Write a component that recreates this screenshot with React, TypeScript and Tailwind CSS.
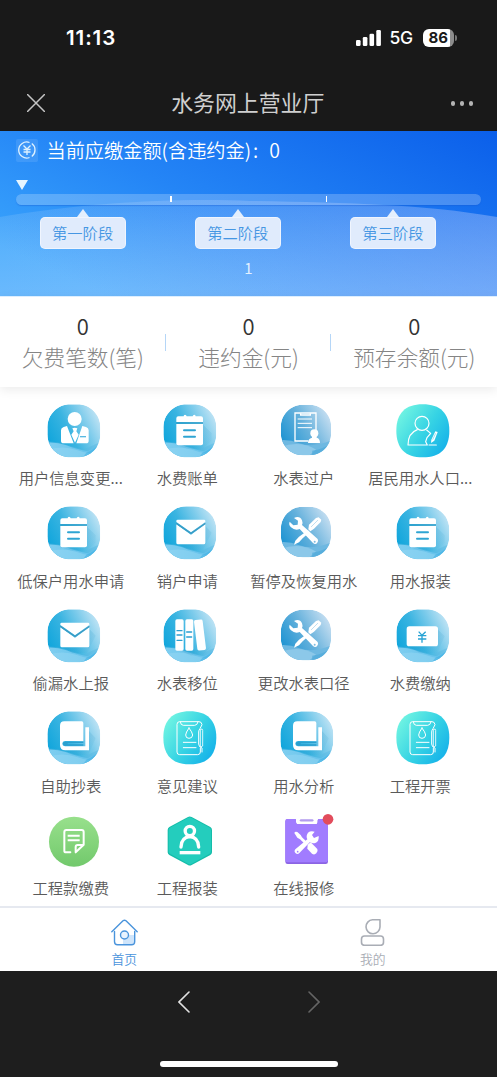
import React from "react";

type IconProps = { children?: React.ReactNode };

const Svg = ({ children }: IconProps) => (
  <svg viewBox="0 0 162 162" className="ml-[6px] h-[54px] w-[54px] shrink-0 overflow-visible">
    {children}
  </svg>
);

const BLOB =
  "M70 1H91C130 1 160 32 160 70V91C160 130 130 160 91 160H70C32 160 1 130 1 91V70C1 32 32 1 70 1Z";
const SQUIRCLE =
  "M80 1C133 1 160 28 160 80C160 133 133 160 80 160C28 160 1 133 1 80C1 28 28 1 80 1Z";

const Defs = () => (
  <svg className="absolute h-0 w-0" aria-hidden="true">
    <defs>
      <linearGradient id="aqua" x1="0" y1="0.62" x2="0.95" y2="0.15">
        <stop offset="0" stopColor="#12a6dc" />
        <stop offset="0.4" stopColor="#3ab4e1" />
        <stop offset="0.7" stopColor="#7ccbeb" />
        <stop offset="1" stopColor="#c4e5f5" />
      </linearGradient>
      <linearGradient id="steel" x1="0" y1="0.7" x2="0.95" y2="0.15">
        <stop offset="0" stopColor="#1c93d2" />
        <stop offset="0.5" stopColor="#65b1dc" />
        <stop offset="1" stopColor="#c9e0f2" />
      </linearGradient>
      <linearGradient id="mint" x1="0.05" y1="0.2" x2="1" y2="0.85">
        <stop offset="0" stopColor="#6ff3e2" />
        <stop offset="0.5" stopColor="#36d3e4" />
        <stop offset="1" stopColor="#12aeea" />
      </linearGradient>
      <linearGradient id="green" x1="0" y1="0" x2="0" y2="1">
        <stop offset="0" stopColor="#98e08c" />
        <stop offset="1" stopColor="#72c96c" />
      </linearGradient>
      <linearGradient id="wave" x1="0" y1="0" x2="1" y2="0">
        <stop offset="0" stopColor="#7fcef0" />
        <stop offset="1" stopColor="#5fbfea" />
      </linearGradient>
      <linearGradient id="shade" x1="0" y1="0" x2="1" y2="1">
        <stop offset="0" stopColor="#0878ad" stopOpacity="0.45" />
        <stop offset="1" stopColor="#0878ad" stopOpacity="0" />
      </linearGradient>
      <clipPath id="blobClip">
        <path d={BLOB} />
      </clipPath>
    </defs>
  </svg>
);

const Blob = ({ children, fill = "url(#aqua)" }: IconProps & { fill?: string }) => (
  <Svg>
    <g clipPath="url(#blobClip)">
      <path d={BLOB} fill={fill} />
      <path d="M0 113Q26 111 54 121L110 137L160 114V162H0Z" fill="#58b9e3" opacity="0.45" />
      <path d="M0 116Q30 114 58 124Q84 135 122 142Q142 132 160 120V162H0Z" fill="url(#wave)" />
      <path d="M6 136Q50 124 90 138Q112 146 128 148L104 162H20Z" fill="#9bd9f4" opacity="0.45" />
      <path d="M118 146Q142 136 156 122V138L126 160H108Z" fill="#3fb0e4" opacity="0.55" />
    </g>
    {children}
  </Svg>
);

const Steel = ({ children }: IconProps) => (
  <Svg>
    <g transform="translate(1.5 1.5) scale(0.95)">
      <g clipPath="url(#blobClip)">
        <path d={BLOB} fill="url(#steel)" />
        <path d="M0 112Q30 110 60 122Q100 138 160 114V162H0Z" fill="#6eb8e1" />
        <path d="M0 134Q60 112 112 142L90 162H0Z" fill="#98cfec" opacity="0.7" />
        <path d="M100 146Q140 138 160 122V162H100Z" fill="#4aa6d8" opacity="0.6" />
      </g>
    </g>
    {children}
  </Svg>
);

const PersonIcon = () => (
  <Blob>
    <g fill="#fff">
      <circle cx="83" cy="45" r="21" />
      <path d="M60 66L80 118H50Q42 118 42 110V79Q42 71 50 69Z" />
      <path d="M106 66L88 118H117Q125 118 125 110V79Q125 71 117 69Z" />
      <path d="M76 73Q83 69 91 73L88 82L95 92L84 116L73 92L80 82Z" />
    </g>
    <path d="M99 98H117" stroke="#59b9e2" strokeWidth="4" />
  </Blob>
);

const CalendarIcon = () => (
  <Blob>
    <path d="M40 123H120V62L146 88V110L118 134H72Z" fill="url(#shade)" opacity="0.45" />
    <g fill="#fff">
      <path d="M40 54V43Q40 37 46 37H62Q62 32 66 32T71 37H89Q90 32 94 32T98 37H114Q120 37 120 43V54Z" />
      <path d="M40 60H120V118Q120 124 114 124H46Q40 124 40 118Z" />
    </g>
    <path d="M40 57H120" stroke="#2d9cc7" strokeWidth="4" />
    <path d="M63 79H96M63 98H96" stroke="#2fa5d3" strokeWidth="6" strokeLinecap="round" />
  </Blob>
);

const MailIcon = () => (
  <Blob>
    <path d="M46 114H127V60L146 80L120 132H76Z" fill="url(#shade)" opacity="0.5" />
    <path d="M40 55L84 86L127 55V110Q127 115 122 115H45Q40 115 40 110Z" fill="#fff" />
    <path d="M40 48V45Q40 41 44 41H123Q127 41 127 45V48L84 79Z" fill="#fff" />
    <path d="M40 52L84 82L127 52" fill="none" stroke="#3a9cc5" strokeWidth="4" />
  </Blob>
);

const TransferIcon = () => (
  <Steel>
    <g stroke="#fff" fill="none" strokeWidth="4">
      <path d="M85 111H45V27H108V80" />
      <path d="M53 45H96M53 58H96M53 71H96" strokeWidth="3" />
      <path d="M62 28V33H91V28" />
    </g>
    <circle cx="103" cy="88" r="12" fill="#fff" />
    <path d="M96 94H110V101Q120 103 120 117H84Q84 104 96 101Z" fill="#fff" />
  </Steel>
);

const ResidentIcon = () => (
  <Svg>
    <path d={SQUIRCLE} fill="url(#mint)" />
    <g stroke="#fff" fill="none" strokeWidth="3.5" strokeLinecap="round" strokeLinejoin="round">
      <circle cx="78" cy="58" r="21" />
      <path d="M64 77C45 84 36 100 36 123H94L89 113L93 101L104 88L92 78" />
      <path d="M99 123H121" />
    </g>
    <path d="M105 117L106 107L118 82L125 84L115 110Z" fill="#fff" />
    <path d="M110 107L119 88" stroke="#35c8e6" strokeWidth="1.5" />
  </Svg>
);

const Tools = ({ hole }: { hole: string }) => (
  <g>
    <path
      d="M42 36Q59 28 66 43Q69 50 66 57L113 99Q117 106 111 112Q105 117 99 111L59 69Q45 75 33 64Q25 56 29 47L40 58L53 56L54 44Z"
      fill="#fff"
    />
    <circle cx="104" cy="107" r="3" fill={hole} />
    <path d="M84 73L89 78L68 97L57 109L42 116L46 104L57 92Z" fill="#fff" />
    <path d="M85 70L87 56L108 36L116 34L124 41L122 48L102 68L91 76Z" fill="#fff" />
    <path d="M94 62L113 43" stroke={hole} strokeWidth="1.500" strokeLinecap="round" />
  </g>
);

const RepairIcon = () => (
  <Steel>
    <Tools hole="#7fbce0" />
  </Steel>
);

const BooksIcon = () => (
  <Blob>
    <path d="M50 124H130L146 108L118 140H84Z" fill="url(#shade)" opacity="0.5" />
    <g fill="#fff">
      <rect x="37" y="31" width="25" height="94" rx="5" />
      <rect x="67" y="31" width="24" height="94" rx="5" />
      <rect x="98" y="32" width="26" height="92" rx="5" transform="rotate(-7 111 78)" />
    </g>
    <path
      d="M42 65H57M42 78H57M42 94H57M71 69H86M71 84H86"
      stroke="#2a9fd1"
      strokeWidth="4"
      strokeLinecap="round"
    />
  </Blob>
);

const MoneyIcon = () => (
  <Blob>
    <path d="M36 112H126V62L146 82L124 132H70Z" fill="url(#shade)" opacity="0.5" />
    <rect x="32" y="52" width="94" height="60" rx="8" fill="#fff" />
    <path
      d="M68 68L78 79L89 68M66 80H91M66 90H91M78 79V101"
      stroke="#28a3d4"
      strokeWidth="4"
      fill="none"
    />
  </Blob>
);

const BookIcon = () => (
  <Blob>
    <path d="M50 118H126V60L146 82L124 132H86Z" fill="url(#shade)" opacity="0.5" />
    <path
      d="M52 31H104Q109 31 109 36V90H54Q46 91 46 98T54 106H115V49H126V118H55Q39 118 39 102V44Q39 31 52 31Z"
      fill="#fff"
    />
    <path d="M109 92H55Q48 93 48 98T55 104H109V100H62V96H109Z" fill="#2a9fce" />
  </Blob>
);

const FormIcon = () => (
  <Svg>
    <path d={SQUIRCLE} fill="url(#mint)" />
    <g stroke="#fff" fill="none" strokeWidth="3" strokeLinejoin="round" strokeLinecap="round">
      <path d="M112 112V123Q112 131 104 131H50Q42 131 42 123V40Q42 32 50 32H108Q116 32 117 41L111 53Q107 57 107 63V99Q107 108 117 111V123" />
      <path d="M52 33Q53 43 61 43H95Q103 43 105 33" />
      <path d="M78 51Q88 64 89 72Q88 82 78 82T68 72Q68 65 78 51Z" />
      <path d="M61 94H99M61 110H99" />
      <path d="M113 55Q119 51 119 58V105L113 108Z" strokeWidth="2.5" />
    </g>
  </Svg>
);

const GreenIcon = () => (
  <Svg>
    <circle cx="81" cy="83" r="75" fill="url(#green)" />
    <g stroke="#fff" fill="none" strokeWidth="6" strokeLinejoin="round" strokeLinecap="round">
      <path d="M70 115H57Q52 115 52 110V54Q52 48 58 48H104Q110 48 110 54V92L86 115V99Q86 93 92 93H108" />
      <path d="M62 65H98M62 79H98" strokeLinecap="butt" />
    </g>
  </Svg>
);

const HexIcon = () => (
  <Svg>
    <path
      d="M75 9Q80 6 86 9L142 39Q147 42 147 48V115Q147 120 142 123L86 153Q80 156 75 153L19 123Q14 120 14 115V48Q14 42 19 39Z"
      fill="#15bda9"
    />
    <path
      d="M76 11Q80 8 85 11L140 41Q144 44 144 48V112Q144 117 140 119L86 149Q80 152 75 149L21 119Q17 117 17 112V48Q17 44 21 41Z"
      fill="#24cdbd"
    />
    <circle cx="80.500" cy="51" r="14" stroke="#fff" strokeWidth="10" fill="none" />
    <path
      d="M54 99Q55 70 80.500 68Q106 70 107 99"
      stroke="#fff"
      strokeWidth="10"
      strokeLinecap="round"
      fill="none"
    />
    <path d="M50 116H112" stroke="#fff" strokeWidth="10" />
  </Svg>
);

const PurpleIcon = () => (
  <Svg>
    <path
      d="M23 15H46Q48 15 48 20V25Q48 31 54 31H107Q113 31 113 25V20Q113 15 117 15H137Q144 15 144 22V143Q144 150 137 150H23Q16 150 16 143V22Q16 15 23 15Z"
      fill="#8b64e4"
    />
    <path
      d="M23 15H46Q48 15 48 20V25Q48 31 54 31H107Q113 31 113 25V20Q113 15 117 15H137Q144 15 144 22V138Q144 145 137 145H23Q16 145 16 138V22Q16 15 23 15Z"
      fill="#a17cff"
    />
    <path d="M63 19H97" stroke="#b29bee" strokeWidth="7" strokeLinecap="round" />
    <path
      d="M104 53L96 63L102 72L116 66Q118 82 106 87Q97 90 90 84L59 116Q53 123 47 118T46 106L82 76Q77 66 84 56Q92 49 104 53Z"
      fill="#fff"
    />
    <circle cx="53" cy="113" r="2.500" fill="#a17cff" />
    <path d="M43 57Q45 51 52 54L62 63L66 70L80 83L74 89L60 76L52 71Z" fill="#fff" />
    <path d="M83 92L92 85L112 105Q115 112 109 118T96 119L82 104Z" fill="#fff" />
    <circle cx="144" cy="16" r="16" fill="#e24c5c" />
  </Svg>
);

const items: { label: string; Icon: () => React.ReactElement }[] = [
  { label: "用户信息变更...", Icon: PersonIcon },
  { label: "水费账单", Icon: CalendarIcon },
  { label: "水表过户", Icon: TransferIcon },
  { label: "居民用水人口...", Icon: ResidentIcon },
  { label: "低保户用水申请", Icon: CalendarIcon },
  { label: "销户申请", Icon: MailIcon },
  { label: "暂停及恢复用水", Icon: RepairIcon },
  { label: "用水报装", Icon: CalendarIcon },
  { label: "偷漏水上报", Icon: MailIcon },
  { label: "水表移位", Icon: BooksIcon },
  { label: "更改水表口径", Icon: RepairIcon },
  { label: "水费缴纳", Icon: MoneyIcon },
  { label: "自助抄表", Icon: BookIcon },
  { label: "意见建议", Icon: FormIcon },
  { label: "用水分析", Icon: BookIcon },
  { label: "工程开票", Icon: FormIcon },
  { label: "工程款缴费", Icon: GreenIcon },
  { label: "工程报装", Icon: HexIcon },
  { label: "在线报修", Icon: PurpleIcon },
];

const stats = ["欠费笔数(笔)", "违约金(元)", "预存余额(元)"];
const stages = ["第一阶段", "第二阶段", "第三阶段"];

const StatusBar = () => (
  <div className="flex h-[75px] items-center justify-between pr-[40px] pl-[66px] font-['Inter',sans-serif] text-white">
    <span className="text-[20.5px] leading-[24px] font-semibold tracking-[0.9px]">11:13</span>
    <div className="flex items-center">
      <svg viewBox="0 0 25 16" className="h-[16px] w-[25px]" fill="#fff">
        <rect x="0" y="10" width="4.600" height="6" rx="1.300" />
        <rect x="6.800" y="7" width="4.600" height="9" rx="1.300" />
        <rect x="13.500" y="3.800" width="4.600" height="12.200" rx="1.300" />
        <rect x="20.300" y="0" width="4.600" height="16" rx="1.300" />
      </svg>
      <span className="ml-[9px] w-[24px] text-[17.5px] leading-[20px] font-medium tracking-[-0.3px]">5G</span>
      <div className="ml-[9px] flex h-[18px] w-[31.5px] items-center justify-center overflow-hidden rounded-[6px] bg-[linear-gradient(90deg,#fff_86%,#8c8c8c_86%)]">
        <span className="text-[15px] leading-[18px] font-bold text-[#191919]">86</span>
      </div>
      <span className="ml-[1px] h-[6px] w-[2px] rounded-r-full bg-[#777]" />
    </div>
  </div>
);

const TitleBar = () => (
  <div className="flex h-[56px] items-center justify-between pr-[24px] pl-[27px] text-[#cfcfcf]">
    <svg viewBox="0 0 18 18" className="h-[18px] w-[18px]" stroke="#c4c4c4" strokeWidth="1.5" strokeLinecap="round">
      <path d="M0.500 0.500L17.500 17.500M17.500 0.500L0.500 17.500" />
    </svg>
    <h1 className="-mt-[2px] text-[21.9px] leading-[30px] font-normal">水务网上营业厅</h1>
    <div className="mt-[1px] flex gap-[4.5px]">
      <i className="h-[4.5px] w-[4.5px] rounded-full bg-[#b4b4b4]" />
      <i className="h-[4.5px] w-[4.5px] rounded-full bg-[#b4b4b4]" />
      <i className="h-[4.5px] w-[4.5px] rounded-full bg-[#b4b4b4]" />
    </div>
  </div>
);

const BannerBackground = () => (
  <svg viewBox="0 0 497 165" preserveAspectRatio="none" className="absolute inset-0 h-full w-full">
    <defs>
      <linearGradient id="sky" x1="0" y1="0.7" x2="1" y2="0">
        <stop offset="0" stopColor="#39a3fc" />
        <stop offset="0.4" stopColor="#2485f6" />
        <stop offset="1" stopColor="#0b5fea" />
      </linearGradient>
      <linearGradient id="hill" x1="0" y1="0" x2="0" y2="1">
        <stop offset="0" stopColor="#fff" stopOpacity="0.08" />
        <stop offset="1" stopColor="#e6f2ff" stopOpacity="0.28" />
      </linearGradient>
      <linearGradient id="hillRight" x1="0" y1="0" x2="1" y2="0">
        <stop offset="0" stopColor="#c8d0ff" stopOpacity="0" />
        <stop offset="0.5" stopColor="#c8d0ff" stopOpacity="0.13" />
        <stop offset="1" stopColor="#c8d0ff" stopOpacity="0.25" />
      </linearGradient>
    </defs>
    <rect width="497" height="165" fill="url(#sky)" />
    <path d="M0 86C90 71 180 67 250 70C350 72 420 73 497 86V165H0Z" fill="url(#hill)" />
    <path d="M0 86C90 71 180 67 250 70C350 72 420 73 497 86V165H0Z" fill="url(#hillRight)" />
  </svg>
);

const Banner = () => (
  <section className="relative h-[165px] shrink-0 text-white">
    <BannerBackground />
    <div className="relative flex h-full flex-col">
      <div className="flex h-[38px] items-center pl-[16px]">
        <span className="flex h-[23px] w-[22px] items-center justify-center rounded-[2px] bg-white/10">
          <svg viewBox="0 0 18 18" className="h-[18px] w-[18px]" fill="none" stroke="#dff2ff" strokeWidth="1.300">
            <path d="M11.500 1.500A8 8 0 1 0 11.500 16.500M13.800 2.600A8 8 0 0 1 13.800 15.400" />
            <path d="M5.500 4.500L9 8L12.500 4.500M5.500 8.500H12.500M5.500 11H12.500M9 8V14" />
          </svg>
        </span>
        <span className="mb-[1px] ml-[8.5px] text-[19.2px] leading-[26px] font-[350]">当前应缴金额(含违约金)</span>
        <span className="mb-[1px] ml-[2px] text-[19.2px] leading-[26px] font-[350]">:</span>
        <span className="mb-[1px] ml-[11px] text-[19.5px] leading-[26px] font-[350]">0</span>
      </div>
      <svg viewBox="0 0 12 10" className="mt-[11px] ml-[16px] h-[10px] w-[12px]" fill="#e6f5ff">
        <path d="M0 0H12L6 10Z" />
      </svg>
      <div className="mx-[16px] mt-[4px] flex h-[10.500px] shrink-0 items-center justify-evenly rounded-full bg-white/22 shadow-[0_1px_1px_rgba(20,90,210,0.35)]">
        <i className="h-[6px] w-[1.500px] bg-white" />
        <i className="h-[6px] w-[1.500px] bg-white" />
      </div>
      <div className="mt-[4.5px] flex px-[5px]">
        {stages.map((s) => (
          <div key={s} className="flex w-[155.2px] flex-col items-center">
            <svg viewBox="0 0 12 8" className="h-[8px] w-[12px]" fill="#e4effd">
              <path d="M6 0L12 8H0Z" />
            </svg>
            <div className="flex h-[32px] w-[86px] items-center justify-center rounded-[5px] border border-white/50 bg-[#e0ebfc] pb-[3px] text-[15.3px] leading-[20px] font-[350] text-[#4596e3]">
              {s}
            </div>
          </div>
        ))}
      </div>
      <div className="mt-[8.5px] text-center text-[15px] leading-[20px] text-[#e2f0ff]">1</div>
    </div>
  </section>
);

const Stats = () => (
  <section className="relative flex h-[91px] shrink-0 border-t border-[#dceeff] bg-white shadow-[0_3px_10px_rgba(0,0,0,0.08)]">
    {stats.map((s, i) => (
      <div key={s} className="flex flex-1 items-center">
        <div className="flex flex-1 flex-col items-center pb-[1px] whitespace-nowrap">
          <span className="text-[22px] leading-[30px] font-[350] text-[#333]">0</span>
          <span className="text-[21.7px] leading-[33px] font-light text-[#858585]">{s}</span>
        </div>
        {i < 2 && <i className="-ml-px h-[17px] w-px bg-[#b5d6f7]" />}
      </div>
    ))}
  </section>
);

const TabBar = () => (
  <nav className="flex h-[65px] shrink-0 border-t-2 border-[#e6e9f0] bg-white text-[12.8px] leading-[18px] font-[350]">
    <div className="flex flex-1 flex-col items-center pt-[10.5px] text-[#4a94dc]">
      <svg viewBox="0 0 27 27" className="h-[27px] w-[27px]" fill="none" stroke="#4a94dc" strokeWidth="1.400" strokeLinecap="round" strokeLinejoin="round">
        <path d="M12 16H23.500V22Q23.500 25 20.500 25H12Z" fill="#cfe5fb" stroke="none" />
        <path d="M0.800 12.800L12 1.800Q13.500 0.600 15 1.800L26.200 12.800" />
        <path d="M3.500 12.500V22.500Q3.500 25.700 6.500 25.700H20.500Q23.700 25.700 23.700 22.500V12.500" />
        <circle cx="13.500" cy="16" r="4" fill="#e8f3fe" />
      </svg>
      <span className="mt-[4.5px]">首页</span>
    </div>
    <div className="flex flex-1 flex-col items-center pt-[10.5px] text-[#a9adb5]">
      <svg viewBox="0 0 27 27" className="h-[27px] w-[27px]" fill="none" stroke="#a9adb5" strokeWidth="1.600" strokeLinejoin="round">
        <path d="M13.500 0.800H21V8A7 7 0 1 1 13.500 0.800Z" />
        <rect x="2.500" y="17" width="22" height="9.300" rx="3" />
      </svg>
      <span className="mt-[4.5px]">我的</span>
    </div>
  </nav>
);

const BrowserBar = () => (
  <footer className="flex h-[106px] shrink-0 flex-col items-center justify-between bg-[#1e1e1e] pt-[20px] pb-[10px]">
    <div className="flex w-[142px] justify-between">
      <svg viewBox="0 0 12 22" className="h-[22px] w-[12px]" fill="none" stroke="#e2e2e2" strokeWidth="1.600" strokeLinecap="round">
        <path d="M11 1L1 11L11 21" />
      </svg>
      <svg viewBox="0 0 12 22" className="h-[22px] w-[12px]" fill="none" stroke="#656565" strokeWidth="1.600" strokeLinecap="round">
        <path d="M1 1L11 11L1 21" />
      </svg>
    </div>
    <div className="h-[6px] w-[178px] rounded-full bg-white" />
  </footer>
);

export default function App() {
  return (
    <div
      lang="zh-CN"
      className="flex h-[1077px] w-[497px] flex-col overflow-hidden bg-white font-['Noto_Sans_CJK_SC',sans-serif]"
    >
      <Defs />
      <header className="h-[131px] shrink-0 bg-[#191919]">
        <StatusBar />
        <TitleBar />
      </header>
      <Banner />
      <Stats />
      <main className="grid min-h-0 flex-1 auto-rows-[102.5px] grid-cols-[repeat(4,116.5px)] content-start bg-white pt-[16.5px] pl-[12.5px]">
        {items.map(({ label, Icon }) => (
          <div key={label} className="flex flex-col items-center">
            <Icon />
            <span className="mt-[8.5px] text-[15.3px] leading-[22px] font-[350] whitespace-nowrap text-[#5a5a5a]">
              {label}
            </span>
          </div>
        ))}
      </main>
      <TabBar />
      <BrowserBar />
    </div>
  );
}
